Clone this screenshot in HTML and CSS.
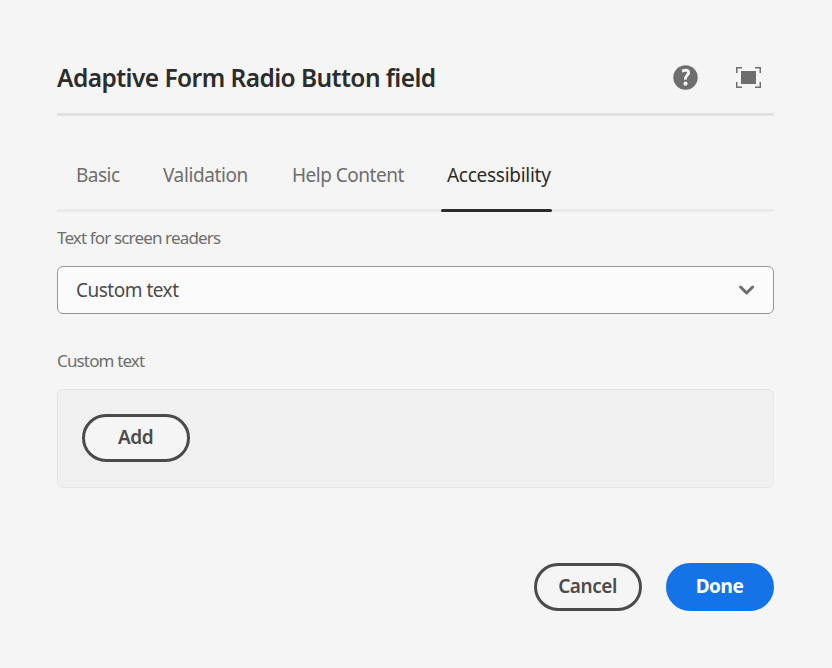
FILE: index.html
```html
<!DOCTYPE html>
<html lang="en">
<head>
<meta charset="utf-8">
<title>Adaptive Form Radio Button field</title>
<link rel="stylesheet" href="styles.css">
</head>
<body>
<form class="dialog">
  <header class="header">
    <h1 class="title">Adaptive Form Radio Button field</h1>
    <div class="actions">
      <svg class="icon" width="25" height="25" viewBox="0 0 25 25" aria-label="Help">
        <circle cx="12.5" cy="12.5" r="12.2" fill="#6e6e6e"/>
        <path d="M9 6.1Q15.6 3.8 15.6 7.8C15.6 10.3 12 10.6 12.4 14.6" fill="none" stroke="#f5f5f5" stroke-width="2.9"/>
        <circle cx="12.5" cy="18.7" r="2.1" fill="#f5f5f5"/>
      </svg>
      <svg class="icon" width="25" height="21" viewBox="0 0 25 21" aria-label="Fullscreen">
        <rect x="5" y="4" width="15" height="13" fill="#6e6e6e"/>
        <path d="M.75 6V.75H6M19 .75h5.25V6M24.25 15v5.25H19M6 20.25H.75V15" fill="none" stroke="#6e6e6e" stroke-width="1.5"/>
      </svg>
    </div>
  </header>
  <nav class="tabs">
    <a class="tab tab-basic"><span>Basic</span></a>
    <a class="tab tab-validation"><span>Validation</span></a>
    <a class="tab tab-help"><span>Help Content</span></a>
    <a class="tab tab-active"><span>Accessibility</span></a>
  </nav>
  <div class="label label-readers"><span>Text for screen readers</span></div>
  <div class="select">
    <span>Custom text</span>
    <svg width="16" height="10" viewBox="0 0 16 10"><path d="M1.6 2l6 6 6-6" fill="none" stroke="#6e6e6e" stroke-width="3" stroke-linecap="round" stroke-linejoin="round"/></svg>
  </div>
  <div class="label label-custom"><span>Custom text</span></div>
  <div class="multifield"><button type="button" class="button"><span>Add</span></button></div>
  <footer class="footer">
    <button type="button" class="button"><span>Cancel</span></button>
    <button type="button" class="button button-primary"><span>Done</span></button>
  </footer>
</form>
</body>
</html>
```
FILE: styles.css
```css
* { box-sizing: border-box; }
body {
  margin: 0;
  background: #f5f5f5;
  color: #4b4b4b;
  font-family: "Noto Sans", "Open Sans", sans-serif;
  font-size: 19px;
}
.dialog { width: 717px; margin: 0 0 0 57px; padding-top: 42px; }
.header {
  display: flex;
  justify-content: space-between;
  height: 74px;
  border-bottom: 3px solid #e1e1e1;
}
.title {
  margin: 0;
  color: #2c2c2c;
  font-size: 24.5px;
  font-weight: 600;
  line-height: 72px;
  letter-spacing: -0.56px;
  white-space: nowrap;
}
.actions { display: flex; align-items: center; gap: 38px; padding-right: 13px; }
.tabs {
  display: flex;
  height: 96px;
  padding-left: 13px;
  border-bottom: 3px solid #eaeaea;
}
.tab {
  height: 96px;
  padding-left: 6px;
  color: #6e6e6e;
  line-height: 118px;
  letter-spacing: -0.5px;
  white-space: nowrap;
}
.tab-basic { width: 87px; }
.tab-validation { width: 129px; letter-spacing: -0.4px; }
.tab-help { width: 155px; }
.tab-active { width: 111px; color: #2c2c2c; position: relative; letter-spacing: -0.27px; }
.tab-active::after {
  content: "";
  position: absolute;
  left: 0;
  right: 0;
  bottom: 0;
  height: 3px;
  border-radius: 1.5px;
  background: #2c2c2c;
}
.label { color: #6e6e6e; font-size: 17px; line-height: 24px; letter-spacing: -0.85px; }
.label-readers { margin-top: 14px; }
.label-custom { margin-top: 35px; }
.select {
  display: flex;
  align-items: center;
  justify-content: space-between;
  height: 48px;
  margin-top: 16px;
  padding: 0 18px;
  border: 1px solid #959595;
  border-radius: 6px;
  background: #fbfbfb;
  letter-spacing: -0.5px;
}
.multifield {
  height: 99px;
  margin-top: 16px;
  padding: 24px;
  border: 1px solid #e6e6e6;
  border-radius: 6px;
  background: #f0f0f0;
}
.button {
  display: flex;
  align-items: center;
  justify-content: center;
  width: 108px;
  height: 48px;
  padding: 0 1px 2px 0;
  border: 3px solid #4b4b4b;
  border-radius: 24px;
  background: #f5f5f5;
  color: #4b4b4b;
  font: 600 19px "Noto Sans", "Open Sans", sans-serif;
  letter-spacing: -0.45px;
}
.button-primary { border-color: #1473e6; background: #1473e6; color: #fff; font-weight: 700; }
.footer { display: flex; justify-content: flex-end; gap: 24px; margin-top: 75px; }
```
